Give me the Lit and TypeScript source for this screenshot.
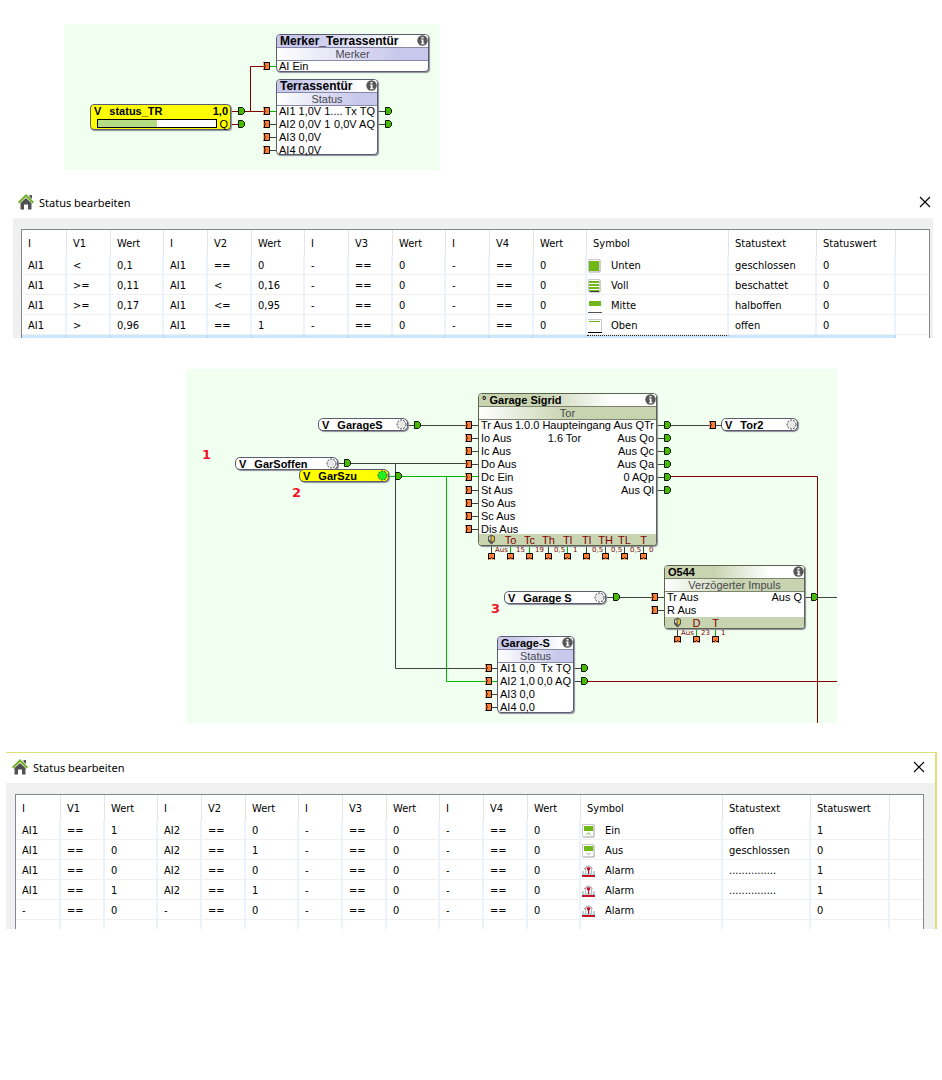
import { LitElement, html, svg, css, nothing } from "lit";
import { customElement, property } from "lit/decorators.js";
import { classMap } from "lit/directives/class-map.js";
import { styleMap } from "lit/directives/style-map.js";

const DARK = "#404040";
const RED = "#800000";
const GREEN = "#00b800";

type Row = [string, string, string];
interface Block {
  x: number; y: number; w: number; h: number;
  title: string; sub: string; theme: "violet" | "olive"; wide?: boolean;
  rows: Row[]; foot?: string[];
}
interface Tag { x: number; y: number; w: number; name: string; on?: boolean }
interface Meter { x: number; y: number; w: number; name: string; value: string; out: string; percent: number }
interface Wire { d: string; c: string }
interface Port { x: number; y: number; kind: "in" | "out" | "up" }
interface Label { x: number; y: number; text: string; kind: "tiny" | "mark" }
interface Diagram {
  x: number; y: number; w: number; h: number;
  blocks: Block[]; tags: Tag[]; meters: Meter[];
  wires: Wire[]; ports: Port[]; labels: Label[];
}

const column = (kind: Port["kind"], x: number, y: number, n: number): Port[] =>
  Array.from({ length: n }, (_, i) => ({ kind, x, y: y + i * 13 }));
const rowOf = (x: number, y: number, n: number): Port[] =>
  Array.from({ length: n }, (_, i) => ({ kind: "up", x: x + i * 19, y }));
const stubs = (x1: number, x2: number, y: number, n: number, c = DARK): Wire[] =>
  Array.from({ length: n }, (_, i) => ({ d: `M${x1} ${y + i * 13 + 0.5}H${x2}`, c }));
const legs = (x: number, y1: number, y2: number, colors: string[]): Wire[] =>
  colors.map((c, i) => ({ d: `M${x + i * 19 + 0.5} ${y1}V${y2}`, c }));

const terrace: Diagram = {
  x: 64, y: 24, w: 376, h: 146,
  blocks: [
    { x: 276, y: 34, w: 153, h: 38, title: "Merker_Terrassentür", sub: "Merker", theme: "violet", wide: true, rows: [["AI Ein", "", ""]] },
    {
      x: 276, y: 79, w: 102, h: 76, title: "Terrassentür", sub: "Status", theme: "violet", wide: true,
      rows: [["AI1 1,0V 1....", "", "Tx TQ"], ["AI2 0,0V 1", "", "0,0V AQ"], ["AI3 0,0V", "", ""], ["AI4 0,0V", "", ""]],
    },
  ],
  tags: [],
  meters: [{ x: 90, y: 104, w: 141, name: "status_TR", value: "1,0", out: "Q", percent: 50 }],
  wires: [
    ...stubs(230, 238, 111, 2, RED),
    { d: "M243 111.5H264M250.5 111.5V66.5H264", c: RED },
    { d: "M270 66.5H276M270 111.5H276", c: GREEN },
    ...stubs(270, 276, 124, 3),
    ...stubs(378, 385, 111, 2),
  ],
  ports: [
    ...column("out", 237, 111, 2),
    { kind: "in", x: 263, y: 66 },
    ...column("in", 263, 111, 4),
    ...column("out", 384, 111, 2),
  ],
  labels: [],
};

const garage: Diagram = {
  x: 186, y: 369, w: 651, h: 354,
  blocks: [
    {
      x: 478, y: 393, w: 179, h: 153, title: "° Garage Sigrid", sub: "Tor", theme: "olive",
      rows: [
        ["Tr Aus", "1.0.0 Haupteingang", "Aus QTr"], ["Io Aus", "1.6 Tor", "Aus Qo"], ["Ic Aus", "", "Aus Qc"],
        ["Do Aus", "", "Aus Qa"], ["Dc Ein", "", "0 AQp"], ["St Aus", "", "Aus Ql"],
        ["So Aus", "", ""], ["Sc Aus", "", ""], ["Dis Aus", "", ""],
      ],
      foot: ["To", "Tc", "Th", "Tl", "Tl", "TH", "TL", "T"],
    },
    {
      x: 664, y: 565, w: 141, h: 64, title: "O544", sub: "Verzögerter Impuls", theme: "olive",
      rows: [["Tr Aus", "", "Aus Q"], ["R Aus", "", ""]], foot: ["D", "T"],
    },
    {
      x: 497, y: 636, w: 77, h: 77, title: "Garage-S", sub: "Status", theme: "violet",
      rows: [["AI1 0,0", "", "Tx TQ"], ["AI2 1,0", "", "0,0 AQ"], ["AI3 0,0", "", ""], ["AI4 0,0", "", ""]],
    },
  ],
  tags: [
    { x: 318, y: 418, w: 90, name: "GarageS" },
    { x: 235, y: 457, w: 103, name: "GarSoffen" },
    { x: 299, y: 469, w: 90, name: "GarSzu", on: true },
    { x: 721, y: 418, w: 77, name: "Tor2" },
    { x: 504, y: 591, w: 102, name: "Garage S" },
  ],
  meters: [],
  wires: [
    { d: "M408 425.5H466M338 463.5H466M395.5 463.5V668.5H486", c: DARK },
    { d: "M389 476.5H478M446.5 476.5V681.5H497", c: GREEN },
    ...stubs(472, 478, 425, 4),
    ...stubs(472, 478, 490, 4),
    ...stubs(657, 665, 425, 6),
    { d: "M670 425.5H710M715 425.5H721", c: DARK },
    { d: "M670 476.5H817.5V723", c: RED },
    { d: "M606 597.5H652M658 597.5H664M658 610.5H664M805 597.5H837", c: DARK },
    { d: "M491 668.5H497M491 694.5H497M491 707.5H497M574 668.5H582M574 681.5H582", c: DARK },
    { d: "M587 681.5H837", c: RED },
    ...legs(491, 546, 554, [DARK, GREEN, GREEN, DARK, GREEN, DARK, DARK, DARK, DARK]),
    ...legs(677, 629, 637, [DARK, GREEN, GREEN]),
  ],
  ports: [
    { kind: "out", x: 413, y: 425 }, { kind: "out", x: 343, y: 463 }, { kind: "out", x: 394, y: 476 },
    ...column("in", 465, 425, 9),
    ...column("out", 663, 425, 6),
    { kind: "in", x: 709, y: 425 },
    { kind: "out", x: 612, y: 597 },
    ...column("in", 651, 597, 2),
    { kind: "out", x: 810, y: 597 },
    ...column("in", 485, 668, 4),
    ...column("out", 580, 668, 2),
    ...rowOf(491, 553, 9),
    ...rowOf(677, 636, 3),
  ],
  labels: [
    ...["Aus", "15", "19", "0,5", "1", "0,5", "0,5", "0,5", "0"].map((text, i): Label => ({ x: (i ? 497 : 495) + i * 19, y: 546, text, kind: "tiny" })),
    ...["Aus", "23", "1"].map((text, i): Label => ({ x: 681 + i * 20, y: 629, text, kind: "tiny" })),
    { x: 202, y: 447, text: "1", kind: "mark" },
    { x: 292, y: 485, text: "2", kind: "mark" },
    { x: 491, y: 601, text: "3", kind: "mark" },
  ],
};

@customElement("logic-canvas")
export class LogicCanvas extends LitElement {
  @property({ attribute: false }) data!: Diagram;

  static styles = css`
    :host { display: block; font: 11px/13px "Liberation Sans", Arial, sans-serif; color: #000; }
    .canvas { position: relative; background: #f0fff0; overflow: hidden; max-width: 100%; }
    .wires { position: absolute; inset: 0; }
    .item { position: absolute; box-sizing: border-box; white-space: nowrap; }
    .block {
      display: flex; flex-direction: column; background: #fff;
      border: 1px solid #5c5c70; border-radius: 4px; box-shadow: 1px 1px 1px #8c8c98;
    }
    .block.olive { border-color: #5c6450; }
    .title {
      display: flex; justify-content: space-between; flex: none; height: 12px;
      padding-left: 3px; border-bottom: 1px solid #8888a8; border-radius: 3px 3px 0 0; font-weight: bold;
    }
    .wide .title { font-size: 12px; }
    .sub { flex: none; height: 12px; border-bottom: 1px solid #8888a8; text-align: center; line-height: 12px; color: #484850; }
    .violet .title { background: linear-gradient(90deg, #c8c8ec 0 20%, #fff 85%); }
    .violet .sub { background: linear-gradient(90deg, #fff, #c8c8ec 80%); }
    .olive .title { background: linear-gradient(90deg, #c8d4b0 0 35%, #fff 75%); border-color: #7c8470; }
    .olive .sub { background: linear-gradient(90deg, #fff, #c8d4b0 50%); border-color: #7c8470; }
    .rows { display: flex; flex-direction: column; gap: 2px; flex: 1; min-height: 0; padding: 0 2px; }
    .row { display: grid; grid-template-columns: auto 1fr auto; flex: none; height: 11px; line-height: 11px; }
    .mid { text-align: center; }
    .foot { display: flex; flex: none; height: 11px; padding-left: 3px; border-radius: 0 0 3px 3px; background: #c8d4b0; color: #800000; }
    .foot span { width: 19px; text-align: center; line-height: 12px; }
    .info { flex: none; width: 11px; height: 11px; }
    .tag, .meter { background: #fff; border: 1px solid #5c5c70; font-weight: bold; box-shadow: 1px 1px 1px #8c8c98; }
    .tag { display: flex; gap: 8px; height: 13px; padding-left: 3px; border-radius: 5px; line-height: 12px; }
    .tag .dot { width: 11px; height: 11px; margin-left: auto; }
    .on, .meter { background: #ff0; }
    .meter { height: 26px; padding: 0 2px 0 3px; border-radius: 4px; }
    .line { display: flex; gap: 8px; height: 13px; }
    .push { margin-left: auto; }
    .bar { flex: 1; height: 9px; margin: 1px 0 0 3px; border: 1px solid #000; background: #fff; box-sizing: border-box; }
    .fill { height: 100%; background: #b4dc84; }
    .gauge { gap: 2px; line-height: 12px; }
    .gauge span { font-weight: normal; }
    .tiny { font: 7px/8px "DejaVu Sans", sans-serif; color: #800000; }
    .mark { font: bold 13px/15px "DejaVu Sans", sans-serif; color: #f01428; }
  `;

  private at(x: number, y: number, w?: number, h?: number) {
    const s: Record<string, string> = { left: `${x - this.data.x}px`, top: `${y - this.data.y}px` };
    if (w) s.width = `${w}px`;
    if (h) s.height = `${h}px`;
    return styleMap(s);
  }

  private port(p: Port) {
    const { x, y } = p;
    if (p.kind === "out")
      return svg`<path d="M${x + 1.5} ${y - 3.5}h4l2 2v3l-2 2h-4z" fill="#48b800" stroke="#001800"></path>`;
    if (p.kind === "in")
      return svg`<path d="M${x + 0.5} ${y - 3.5}h6v7h-6" fill="#ff7c30" stroke="#000"></path><path d="M${x + 1.5} ${y - 3}v2l1 1l-1 1v2" fill="none" stroke="#000"></path>`;
    return svg`<path d="M${x - 2.5} ${y + 6.5}v-6h6v6" fill="#ff7c30" stroke="#000"></path><path d="M${x - 2} ${y + 5.5}h1.500l1-1l1 1h1.500" fill="none" stroke="#000"></path>`;
  }

  private block(b: Block) {
    return html`<section class=${classMap({ item: true, block: true, [b.theme]: true, wide: !!b.wide })} style=${this.at(b.x, b.y, b.w, b.h)}>
      <div class="title"><span>${b.title}</span>
        <svg class="info" viewBox="0 0 11 11"><circle cx="5.5" cy="5.5" r="5.2" fill="#585858"></circle><path d="M4.5 2h2v1.6h-2zM4 4.6h2.5v3.6h1v1H4v-1h.8V5.6H4z" fill="#fff"></path></svg>
      </div>
      <div class="sub">${b.sub}</div>
      <div class="rows">
        ${b.rows.map((r) => html`<div class="row"><span>${r[0]}</span><span class="mid">${r[1]}</span><span>${r[2]}</span></div>`)}
      </div>
      ${b.foot ? html`<div class="foot"><span><svg width="9" height="11" viewBox="0 0 9 11">
          <path d="M1 2.500L4.500 .5 8 2.500V7L4.500 10.500 1 7z" fill="#505050"></path><path d="M4.500 1.500L7 3v3.500L4.500 8z" fill="#e0bc30"></path><path d="M2 3l1.500-.8V6.500L2 5.500z" fill="#d8d8d8"></path>
        </svg></span>${b.foot.map((f) => html`<span>${f}</span>`)}</div>` : nothing}
    </section>`;
  }

  render() {
    const d = this.data;
    return html`<div class="canvas" style=${styleMap({ width: `${d.w}px`, height: `${d.h}px` })}>
      <svg class="wires" width=${d.w} height=${d.h} viewBox="${d.x} ${d.y} ${d.w} ${d.h}">
        ${d.wires.map((w) => svg`<path d=${w.d} fill="none" stroke=${w.c}></path>`)}
        ${d.ports.map((p) => this.port(p))}
      </svg>
      ${d.blocks.map((b) => this.block(b))}
      ${d.tags.map((t) => html`<div class=${classMap({ item: true, tag: true, on: !!t.on })} style=${this.at(t.x, t.y, t.w)}>
        <span>V</span><span>${t.name}</span>
        <svg class="dot" viewBox="0 0 11 11"><circle cx="5.5" cy="5.5" r="4.500" fill=${t.on ? "#20f020" : "#e8e8e8"} stroke="#404040" stroke-dasharray="2 1.200"></circle></svg>
      </div>`)}
      ${d.meters.map((m) => html`<div class="item meter" style=${this.at(m.x, m.y, m.w)}>
        <div class="line"><span>V</span><span>${m.name}</span><span class="push">${m.value}</span></div>
        <div class="line gauge"><div class="bar"><div class="fill" style=${styleMap({ width: `${m.percent}%` })}></div></div><span>${m.out}</span></div>
      </div>`)}
      ${d.labels.map((l) => html`<span class=${"item " + l.kind} style=${this.at(l.x, l.y)}>${l.text}</span>`)}
    </div>`;
  }
}

const frame = svg`<path d="M.5 13V.5H12" fill="none" stroke="#c8c8c8"></path><path d="M12 1v12H1" fill="none" stroke="#a0a0a0"></path>`;
const alarm = svg`<path d="M2.500 5A4.300 4.300 0 0 1 10.500 5" fill="none" stroke="#c81428" stroke-dasharray="1.800 .7"></path>
  <path d="M3.500 10V5a3 3 0 0 1 6 0V10z" fill="#f4fafa" stroke="#90b8b8" stroke-width=".8"></path>
  <path d="M1 7v4h11V7" fill="none" stroke="#90b8b8" stroke-width="1.200"></path>
  <circle cx="6.500" cy="4.800" r="1.800" fill="#c81428"></circle><path d="M6 5h1.200v5H6z" fill="#c81428"></path>
  <path d="M0 11h13v2H0z" fill="#c81428"></path>`;
const symbols: Record<string, unknown> = {
  Unten: svg`${frame}<path d="M1 2h10v10H1z" fill="#70b818"></path>`,
  Voll: svg`${frame}<path d="M1 2h10v2H1zM1 5h10v2H1zM1 8h10v2H1zM1 11h10v1H1z" fill="#70b818"></path><path d="M2 12.500h9" stroke="#404040"></path>`,
  Mitte: svg`<path d="M1 2h12v5H1z" fill="#70b818"></path><path d="M0 13.500h14" stroke="#505050"></path>`,
  Oben: svg`<path d="M0 .5h13.500v12" fill="none" stroke="#c8c8c8"></path><path d="M1 2.500h11" stroke="#70b818"></path><path d="M0 13.500h14" stroke="#000"></path>`,
  Ein: svg`${frame}<path d="M2 2h9v5H2z" fill="#70b818"></path><path d="M4.500 10.500l2-1.500 2 1.500" fill="none" stroke="#70b818"></path>`,
  Aus: svg`${frame}<path d="M2 2h9v5H2z" fill="#70b818"></path><path d="M4.500 9l2 1.500 2-1.500" fill="none" stroke="#90a890"></path>`,
  Alarm: alarm,
};

const heads = ["I", "V1", "Wert", "I", "V2", "Wert", "I", "V3", "Wert", "I", "V4", "Wert", "Symbol", "Statustext", "Statuswert", ""];
const unused = ["-", "==", "0", "-", "==", "0"];

@customElement("status-dialog")
export class StatusDialog extends LitElement {
  @property({ attribute: false }) rows: string[][] = [];
  @property({ type: Boolean, reflect: true }) framed = false;

  static styles = css`
    :host { display: block; color: #000; background: #fff; }
    :host([framed]) { border-top: 1px solid #dce078; border-right: 2px solid #dce078; }
    .bar { display: flex; align-items: center; height: 30px; padding: 0 2px 0 5px; font: 11px/16px "Noto Sans", "Segoe UI", sans-serif; }
    .home { width: 16px; height: 16px; margin: 0 5px 2px 0; }
    .caption { margin: 0; font: inherit; }
    .close { margin: 0 0 2px auto; width: 12px; height: 12px; padding: 0; border: 0; background: none; }
    .close svg { display: block; }
    .body { background: #f0f0f0; padding: 11px 3px 0 8px; }
    :host([framed]) .bar { padding: 0 10px 0 6px; }
    :host([framed]) .body { padding: 11px 11px 0 9px; }
    .list { border: 1px solid #828790; border-bottom: 0; background: #fff; overflow: hidden; }
    table { width: 100%; table-layout: fixed; border-collapse: separate; border-spacing: 0; font: 11px/14px "DejaVu Sans Condensed", Tahoma, sans-serif; }
    .first { width: 45px; }
    .narrow { width: 44px; }
    .value { width: 53px; }
    .symbol { width: 142px; }
    .text { width: 88px; }
    .number { width: 79px; }
    th, td { box-sizing: border-box; padding: 2px 0 0 6px; text-align: left; font-weight: normal; white-space: nowrap; overflow: hidden; }
    th { height: 25px; border-right: 1px solid #e4e4e4; }
    td { height: 20px; border-right: 2px solid #ecf2fb; border-bottom: 1px solid #f0f0f0; }
    th:last-child, td:last-child { border-right: 0; }
    .pic { padding-left: 1px; }
    .sym { display: flex; align-items: center; gap: 9px; }
    .sym svg { flex: none; width: 14px; height: 14px; }
    .rest td { height: 9px; border-bottom: 0; }
    .picked td { height: 3px; padding-top: 0; border-bottom: 0; background: #cce8ff; border-color: #c0dcf4; }
    .picked td:last-child { background: #fff; }
    .picked .pic { border-top: 1px dotted #402000; }
  `;

  render() {
    return html`
      <header class="bar">
        <svg class="home" viewBox="0 0 16 16">
          <path d="M11.500 1H14v4l-2.500-2z" fill="#585858"></path>
          <path d="M8 4l5.500 5v6.500H10V10.500H6v5H2.500V9z" fill="#505050"></path>
          <path d="M.7 8.700L8 1.500l7.300 7.200" fill="none" stroke="#70b020" stroke-width="2"></path>
        </svg>
        <h2 class="caption">Status bearbeiten</h2>
        <button class="close" aria-label="Schließen"><svg width="12" height="12" viewBox="0 0 12 12"><path d="M1 1l10 10M11 1L1 11" stroke="#000" stroke-width="1.100"></path></svg></button>
      </header>
      <div class="body"><div class="list"><table>
        <colgroup>
          ${heads.map((h, i) => html`<col class=${i === 0 ? "first" : i === 12 ? "symbol" : i === 13 ? "text" : i === 14 ? "number" : h === "Wert" ? "value" : h ? "narrow" : "fill"}>`)}
        </colgroup>
        <thead><tr>${heads.map((h) => html`<th scope="col">${h}</th>`)}</tr></thead>
        <tbody>
          ${this.rows.map((r) => html`<tr>${r.map((c, i) => i === 12
            ? html`<td class="pic"><span class="sym"><svg viewBox="0 0 14 14">${symbols[c]}</svg>${c}</span></td>`
            : html`<td>${c}</td>`)}</tr>`)}
          <tr class=${this.framed ? "rest" : "picked"}>${heads.map((_, i) => html`<td class=${i === 12 ? "pic" : ""}></td>`)}</tr>
        </tbody>
      </table></div></div>`;
  }
}

const line = (left: string[], symbol: string, text: string, value: string) => [...left, ...unused, symbol, text, value, ""];

const terraceRows = [
  line(["AI1", "<", "0,1", "AI1", "==", "0"], "Unten", "geschlossen", "0"),
  line(["AI1", ">=", "0,11", "AI1", "<", "0,16"], "Voll", "beschattet", "0"),
  line(["AI1", ">=", "0,17", "AI1", "<=", "0,95"], "Mitte", "halboffen", "0"),
  line(["AI1", ">", "0,96", "AI1", "==", "1"], "Oben", "offen", "0"),
];
const garageRows = [
  line(["AI1", "==", "1", "AI2", "==", "0"], "Ein", "offen", "1"),
  line(["AI1", "==", "0", "AI2", "==", "1"], "Aus", "geschlossen", "0"),
  line(["AI1", "==", "0", "AI2", "==", "0"], "Alarm", "...............", "1"),
  line(["AI1", "==", "1", "AI2", "==", "1"], "Alarm", "...............", "1"),
  line(["-", "==", "0", "-", "==", "0"], "Alarm", "", "0"),
];

@customElement("app-root")
export class AppRoot extends LitElement {
  static styles = css`
    :host { display: block; background: #fff; min-height: 100vh; }
    .page { display: flex; flex-direction: column; padding-top: 24px; }
    .terrace { margin-left: 64px; }
    .first { margin: 18px 9px 0 13px; }
    .garage { margin: 31px 0 0 186px; }
    .second { margin: 29px 5px 0 6px; }
  `;

  render() {
    return html`<main class="page">
      <logic-canvas class="terrace" .data=${terrace}></logic-canvas>
      <status-dialog class="first" .rows=${terraceRows}></status-dialog>
      <logic-canvas class="garage" .data=${garage}></logic-canvas>
      <status-dialog class="second" framed .rows=${garageRows}></status-dialog>
    </main>`;
  }
}
